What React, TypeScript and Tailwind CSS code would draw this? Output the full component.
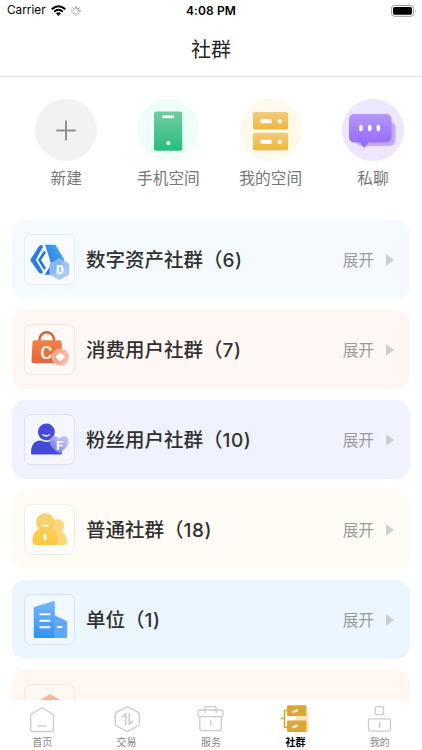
import type { ReactNode } from "react";

const PlusIcon = () => (
  <svg width="62" height="62" viewBox="0 0 62 62">
    <path d="M31 21.5v20M21.3 31.4h19.4" stroke="#8f8f8f" strokeWidth="2" />
  </svg>
);

const PhoneIcon = () => (
  <svg width="62" height="62" viewBox="0 0 62 62">
    <defs>
      <linearGradient id="phone" x1="0" y1="0" x2="0" y2="1">
        <stop offset="0" stopColor="#72cda1" />
        <stop offset="1" stopColor="#27bd7e" />
      </linearGradient>
    </defs>
    <rect x="17" y="12.5" width="28.3" height="39.3" rx="2" fill="url(#phone)" />
    <rect x="25.5" y="16.5" width="11.5" height="2.6" fill="#fff" />
    <circle cx="31.4" cy="44" r="2.1" fill="#fff" />
  </svg>
);

const DrawersIcon = () => (
  <svg width="62" height="62" viewBox="0 0 62 62">
    <defs>
      <linearGradient id="drawer" x1="0" y1="0" x2="0" y2="1">
        <stop offset="0" stopColor="#f1cc80" />
        <stop offset="1" stopColor="#efb83c" />
      </linearGradient>
    </defs>
    {[13, 33.7].map((y) => (
      <g key={y}>
        <rect x="13" y={y} width="35.2" height="17.5" rx="2" fill="url(#drawer)" />
        <rect x="20.7" y={y + 7.2} width="10.8" height="4" fill="#fff" />
        <circle cx="39.8" cy={y + 9.3} r="2.1" fill="#fff" />
      </g>
    ))}
  </svg>
);

const ChatIcon = () => (
  <svg width="62" height="62" viewBox="0 0 62 62">
    <defs>
      <linearGradient id="chat" x1="0" y1="0" x2="0" y2="1">
        <stop offset="0" stopColor="#b396fa" />
        <stop offset="1" stopColor="#9467fb" />
      </linearGradient>
    </defs>
    <rect x="14" y="22.5" width="39.5" height="24.5" rx="6" fill="#c3a9fc" />
    <path
      d="M12 15h32.5a5 5 0 0 1 5 5v18.5a5 5 0 0 1-5 5H26.5L22.3 49l-4.2-5.5H12a5 5 0 0 1-5-5V20a5 5 0 0 1 5-5Z"
      fill="url(#chat)"
    />
    <path
      d="M19 27.4v3.2M27.7 27.4v3.2M36.3 27.4v3.2"
      stroke="#fff"
      strokeWidth="3.5"
      strokeLinecap="round"
    />
  </svg>
);

const AssetIcon = () => (
  <svg className="shrink-0" width="51" height="51" viewBox="0 0 51 51">
    <defs>
      <linearGradient id="asset" x1="1" y1="0" x2="0" y2="1">
        <stop offset="0" stopColor="#49adf9" />
        <stop offset="1" stopColor="#2370dc" />
      </linearGradient>
      <linearGradient id="assetBadge" x1="0" y1="0" x2="0" y2="1">
        <stop offset="0" stopColor="#87b3f1" />
        <stop offset="1" stopColor="#a9cbfa" />
      </linearGradient>
    </defs>
    <path d="M21 10.8h10.5L40.4 26l-8.9 14.8H20.800L27 30.500l-1-4.500Z" fill="url(#asset)" />
    <path
      d="M15.3 12.2c.8-1 3.4-.7 3.4.4L11.4 26l7.3 12c0 1.2-2.6 1.7-3.6.4L6.6 26Z"
      fill="#2b7be2"
      stroke="#2b7be2"
      strokeWidth=".8"
      strokeLinejoin="round"
    />
    <path d="m21 17.5-5.5 8.5 5.5 9" fill="none" stroke="#2676df" strokeWidth="2.6" />
    <path d="m24 20.5-3.5 5.5 3.5 5.5" fill="none" stroke="#f7fbff" strokeWidth="1.3" />
    <path
      d="m35.3 24.7 9.3 5.2v10.3l-9.3 5.2-9.3-5.2V29.9Z"
      fill="url(#assetBadge)"
      fillOpacity=".88"
      stroke="#9bc1f5"
      strokeWidth="1"
      strokeLinejoin="round"
    />
    <text x="32" y="40" fontSize="12" fontWeight="700" fill="#fff" fontFamily="Roboto, sans-serif">
      D
    </text>
  </svg>
);

const ShoppingIcon = () => (
  <svg className="shrink-0" width="51" height="51" viewBox="0 0 51 51">
    <defs>
      <linearGradient id="bag" x1="0" y1="0" x2="0" y2="1">
        <stop offset="0" stopColor="#f18247" />
        <stop offset="1" stopColor="#e66335" />
      </linearGradient>
    </defs>
    <path d="M15.5 19v-3.5a7.2 7.2 0 0 1 14.4 0V19" fill="none" stroke="#d76335" strokeWidth="2.4" />
    <path d="M10.5 16.3h25a2 2 0 0 1 2 1.8l1.5 19a2 2 0 0 1-2 2.1H9.500a2 2 0 0 1-2-2.100l1-19a2 2 0 0 1 2-1.800Z" fill="url(#bag)" />
    <text x="16.3" y="35.3" fontSize="18.5" fontWeight="500" fill="#fff" fontFamily="Roboto, sans-serif">
      C
    </text>
    <circle cx="36.2" cy="33" r="8.8" fill="#f6b199" fillOpacity=".88" />
    <path d="m36.2 29.3 3.7 3.7-3.7 3.7-3.7-3.7Z" fill="#fff" stroke="#fff" strokeWidth="1.5" strokeLinejoin="round" />
  </svg>
);

const FansIcon = () => (
  <svg className="shrink-0" width="51" height="51" viewBox="0 0 51 51">
    <defs>
      <linearGradient id="heart" x1="1" y1="0" x2="0" y2="1">
        <stop offset="0" stopColor="#c5c7fa" />
        <stop offset="1" stopColor="#7479e5" />
      </linearGradient>
    </defs>
    <circle cx="22.4" cy="18" r="8.4" fill="#444bd9" />
    <path d="M19 20.7q3.2 2.6 6.4 0" fill="none" stroke="#fff" strokeWidth="1.3" strokeLinecap="round" />
    <path
      d="M7 39c0-6.5 2.5-12.5 9.5-12.5 2.2 0 3 1.5 6 1.5s4-1.5 6-1.5c7 0 9.3 6 9.3 12.5 0 1-.6 1.5-1.600 1.500H8.600C7.600 40.500 7 40 7 39Z"
      fill="#444bd9"
    />
    <path
      d="M35.3 39.4c-4-2.4-9.8-7.2-9.8-12.1 0-5.8 7.3-6.9 9.6-2.4 2.4-4.5 9.5-3.4 9.5 2.4 0 4.9-5.4 9.7-9.3 12.1Z"
      fill="url(#heart)"
      fillOpacity=".92"
    />
    <text x="32" y="35.8" fontSize="13" fontWeight="700" fill="#fff" fontFamily="Roboto, sans-serif">
      F
    </text>
  </svg>
);

const PeopleIcon = () => (
  <svg className="shrink-0" width="51" height="51" viewBox="0 0 51 51">
    <defs>
      <linearGradient id="people" x1="0" y1="0" x2="0" y2="1">
        <stop offset="0" stopColor="#f5d477" />
        <stop offset="1" stopColor="#fac93e" />
      </linearGradient>
    </defs>
    <g fill="#fad978">
      <circle cx="33.5" cy="21.7" r="6.7" />
      <path d="M28 27h8.5c4 1.5 6.7 6 6.7 11 0 2-1 3-2.5 3H28Z" />
    </g>
    <path
      d="M21.4 9.2a9 9 0 0 1 6.5 15.3c3.8 2.5 5.8 6 5.8 12.5 0 2.5-1 4-3.5 4H12.500C9.500 41 8.500 39.500 8.500 37c0-6.500 2-9.500 6.300-12.500A9 9 0 0 1 21.400 9.200Z"
      fill="url(#people)"
    />
    <path d="M18.2 21q3.2 2.5 6.4 0" fill="none" stroke="#fff" strokeWidth="1.4" strokeLinecap="round" />
    <rect x="19.7" y="30" width="2.7" height="6" fill="#fff" />
  </svg>
);

const BuildingIcon = () => (
  <svg className="shrink-0" width="51" height="51" viewBox="0 0 51 51">
    <defs>
      <linearGradient id="building" x1="0" y1="0" x2="0" y2="1">
        <stop offset="0" stopColor="#76b5fb" />
        <stop offset="1" stopColor="#3390fa" />
      </linearGradient>
    </defs>
    <path d="m30.500 21.300 11.500 5.500c.8.400 1.200 1 1.200 1.800V42.400c0 1-.7 1.700-1.700 1.700h-11Z" fill="#61a6fa" />
    <path
      d="M11 12.800 29 7.200c1-.3 1.800.2 1.800 1.200v35.700H11.400c-1 0-1.700-.7-1.700-1.700V14.600c0-.9.400-1.500 1.300-1.800Z"
      fill="url(#building)"
    />
    <path d="M15.5 20.200h10.800M15.500 26.700h10.800M15.500 33.200h10.800M33.200 33h5.100" stroke="#fff" strokeWidth="2" />
  </svg>
);

const HouseIcon = () => (
  <svg className="shrink-0" width="51" height="51" viewBox="0 0 51 51">
    <path d="m26.2 10.800 15 9v20H11.200v-20Z" fill="#f8b797" stroke="#f8b797" strokeWidth="1.5" strokeLinejoin="round" />
  </svg>
);

const actions = [
  { label: "新建", circle: "bg-[#f2f2f2]", icon: <PlusIcon /> },
  { label: "手机空间", circle: "bg-[#effef9]", icon: <PhoneIcon /> },
  { label: "我的空间", circle: "bg-[#fef9eb]", icon: <DrawersIcon /> },
  { label: "私聊", circle: "bg-[#ece6fe]", icon: <ChatIcon /> },
];

const groups = [
  { name: "数字资产社群", count: 6, card: "bg-[#f4faff]", box: "border-[#e3edfc] bg-[#f8fbff]", icon: <AssetIcon /> },
  { name: "消费用户社群", count: 7, card: "bg-[#fff7f4]", box: "border-[#fae5db] bg-[#fffaf8]", icon: <ShoppingIcon /> },
  { name: "粉丝用户社群", count: 10, card: "bg-[#f0f2ff]", box: "border-[#dfe1f8] bg-[#f5f6ff]", icon: <FansIcon /> },
  { name: "普通社群", count: 18, card: "bg-[#fffcf5]", box: "border-[#f3eee5] bg-[#fffdf9]", icon: <PeopleIcon /> },
  { name: "单位", count: 1, card: "bg-[#ebf6ff]", box: "border-[#d8e2f7] bg-[#f2f9ff]", icon: <BuildingIcon /> },
  { name: "", count: 0, card: "bg-[#fff7f0]", box: "border-[#f8e8dd] bg-[#fff8f3]", icon: <HouseIcon /> },
];

const TabSvg = ({ children }: { children: ReactNode }) => (
  <svg
    width="32"
    height="30"
    viewBox="0 0 32 30"
    fill="none"
    stroke="#cbcbcb"
    strokeWidth="1.3"
    strokeLinejoin="round"
    strokeLinecap="round"
  >
    {children}
  </svg>
);

const tabs = [
  {
    label: "首页",
    icon: (
      <TabSvg>
        <path d="M16 3.700 26.200 9.800Q27.400 10.600 27.400 12.300v13.200a2 2 0 0 1-2 2H6.700a2 2 0 0 1-2-2V12.300q0-1.700 1.200-2.500Z" />
        <path d="M12.5 22h7" strokeWidth="1.6" />
      </TabSvg>
    ),
  },
  {
    label: "交易",
    icon: (
      <TabSvg>
        <path d="M15.300 3.100q1-.6 2 0l10 5.300q1 .6 1 1.700v9.900q0 1.100-1 1.700l-10 5.400q-1 .6-2 0l-10-5.400q-1-.6-1-1.700v-9.900q0-1.100 1-1.700Z" />
        <path d="m11.500 13 3.300-3.300v10.800M18.300 9.700v10.800l3.200-3.300" strokeWidth="1.5" />
      </TabSvg>
    ),
  },
  {
    label: "服务",
    icon: (
      <TabSvg>
        <rect x="3" y="6" width="25" height="6.7" rx="1.5" />
        <path d="M10 8.500V3.900a1.300 1.300 0 0 1 1.300-1.300h8.500a1.300 1.300 0 0 1 1.300 1.300v4.600M4.800 12.900v11.700a2 2 0 0 0 2 2h17.500a2 2 0 0 0 2-2V12.900M15.700 16.500v5" />
      </TabSvg>
    ),
  },
  {
    label: "社群",
    active: true,
    icon: (
      <svg width="32" height="30" viewBox="0 0 32 30">
        <path d="M17 9.500h12.700v19H14V16h3Z" fill="#fae5c1" />
        <path d="M9 6.500H5.500v16.700H9M1.500 14.500h4" fill="none" stroke="#d7a12c" strokeWidth="1.5" />
        <rect x="8" y="1.2" width="19.5" height="10.8" rx="1.3" fill="#dba736" />
        <rect x="8" y="16.5" width="19.5" height="11.5" rx="1.3" fill="#dba736" />
        <path d="m13.500 8.300 5.200-2M13.500 23.500l5.200-2" stroke="#fff" strokeWidth="2" />
      </svg>
    ),
  },
  {
    label: "我的",
    icon: (
      <TabSvg>
        <rect x="11.3" y="2.7" width="8.2" height="8" rx="1" />
        <rect x="4.5" y="14.8" width="22" height="12.3" rx="1.5" />
        <path d="M15.5 18.500v5" strokeWidth="1.5" />
      </TabSvg>
    ),
  },
];

const StatusBar = () => (
  <div className="flex h-[22px] items-center justify-between pl-[7px] pr-[5px] font-['Inter','Liberation_Sans',sans-serif] text-black">
    <div className="flex w-[110px] items-center">
      <span className="w-[39.5px] text-[11.8px] leading-none">Carrier</span>
      <svg className="ml-[4.5px]" width="15" height="11" viewBox="0 0 15 11" fill="none" stroke="#000">
        <path d="M.7 4.200Q7.500-1.700 14.300 4.200" strokeWidth="2.1" />
        <path d="M3.200 6.700Q7.500 3 11.800 6.700" strokeWidth="1.9" />
        <path d="m7.500 11-2.500-2.700Q7.500 6.400 10 8.300Z" fill="#000" stroke="none" />
      </svg>
      <svg className="ml-[5px]" width="10" height="10" viewBox="0 0 10 10" strokeWidth="1" strokeLinecap="round">
        {[0, 45, 90, 135, 180, 225, 270, 315].map((angle, i) => (
          <path
            key={angle}
            d="M5 .6v2.1"
            transform={`rotate(${angle} 5 5)`}
            stroke={i < 3 ? "#777" : "#aaa"}
          />
        ))}
      </svg>
    </div>
    <span className="-ml-0.5 text-[12px] font-semibold leading-none tracking-[0.1px]">4:08 PM</span>
    <div className="flex w-[110px] justify-end">
      <svg width="26" height="12" viewBox="0 0 26 12">
        <rect x=".5" y=".5" width="22" height="10.8" rx="3" fill="#fff" stroke="#999" />
        <rect x="2" y="2" width="19" height="7.8" rx="1.7" />
        <path d="M24 4.200q1.600 1.700 0 3.400Z" fill="#999" />
      </svg>
    </div>
  </div>
);

const App = () => {
  return (
    <div className="flex h-[750px] w-[422px] flex-col overflow-hidden bg-white font-['Inter','Noto_Sans_CJK_SC',sans-serif]">
      <StatusBar />
      <header className="flex h-[55px] shrink-0 items-center justify-center border-b border-[#e2e2e2] pt-px">
        <h1 className="text-[20px] leading-none text-[#222]">社群</h1>
      </header>

      <main className="min-h-0 flex-1 overflow-hidden">
        <div className="flex pl-[15px] pt-[22px]">
          {actions.map(({ label, circle, icon }) => (
            <button key={label} className="flex w-[102.3px] shrink-0 flex-col items-center">
              <span className={`size-[62px] rounded-full ${circle}`}>{icon}</span>
              <span className="mt-1.5 text-[15.7px] leading-6 text-[#777]">{label}</span>
            </button>
          ))}
        </div>

        <div className="mt-[29px] flex flex-col gap-[11.5px] px-3">
          {groups.map(({ name, count, card, box, icon }) => (
            <div key={name} className={`flex h-[78.5px] shrink-0 items-center rounded-[14px] pl-3 pr-4 ${card}`}>
              <div className={`flex size-[51px] shrink-0 items-center justify-center rounded-[7px] border ${box}`}>
                {icon}
              </div>
              {name && (
                <>
                  <span className="ml-[11px] pt-0.5 text-[19.5px] font-medium leading-7 text-[#303030]">
                    {name}（<span className="text-[19px] tracking-[0.5px]">{count})</span>
                  </span>
                  <span className="ml-auto pt-[3px] text-[15.7px] leading-6 text-[#9b9b9b]">展开</span>
                  <svg className="mt-px ml-3" width="8" height="12" viewBox="0 0 8 12">
                    <path d="m0 0 8 6-8 6Z" fill="#cecfd1" />
                  </svg>
                </>
              )}
            </div>
          ))}
        </div>
      </main>

      <nav className="flex h-[50px] shrink-0 bg-white">
        {tabs.map(({ label, icon, active }) => (
          <button key={label} className="flex flex-1 flex-col items-center pt-1">
            {icon}
            <span className={`text-[10px] leading-4 ${active ? "font-bold text-black" : "text-[#888]"}`}>
              {label}
            </span>
          </button>
        ))}
      </nav>
    </div>
  );
};

export default App;
